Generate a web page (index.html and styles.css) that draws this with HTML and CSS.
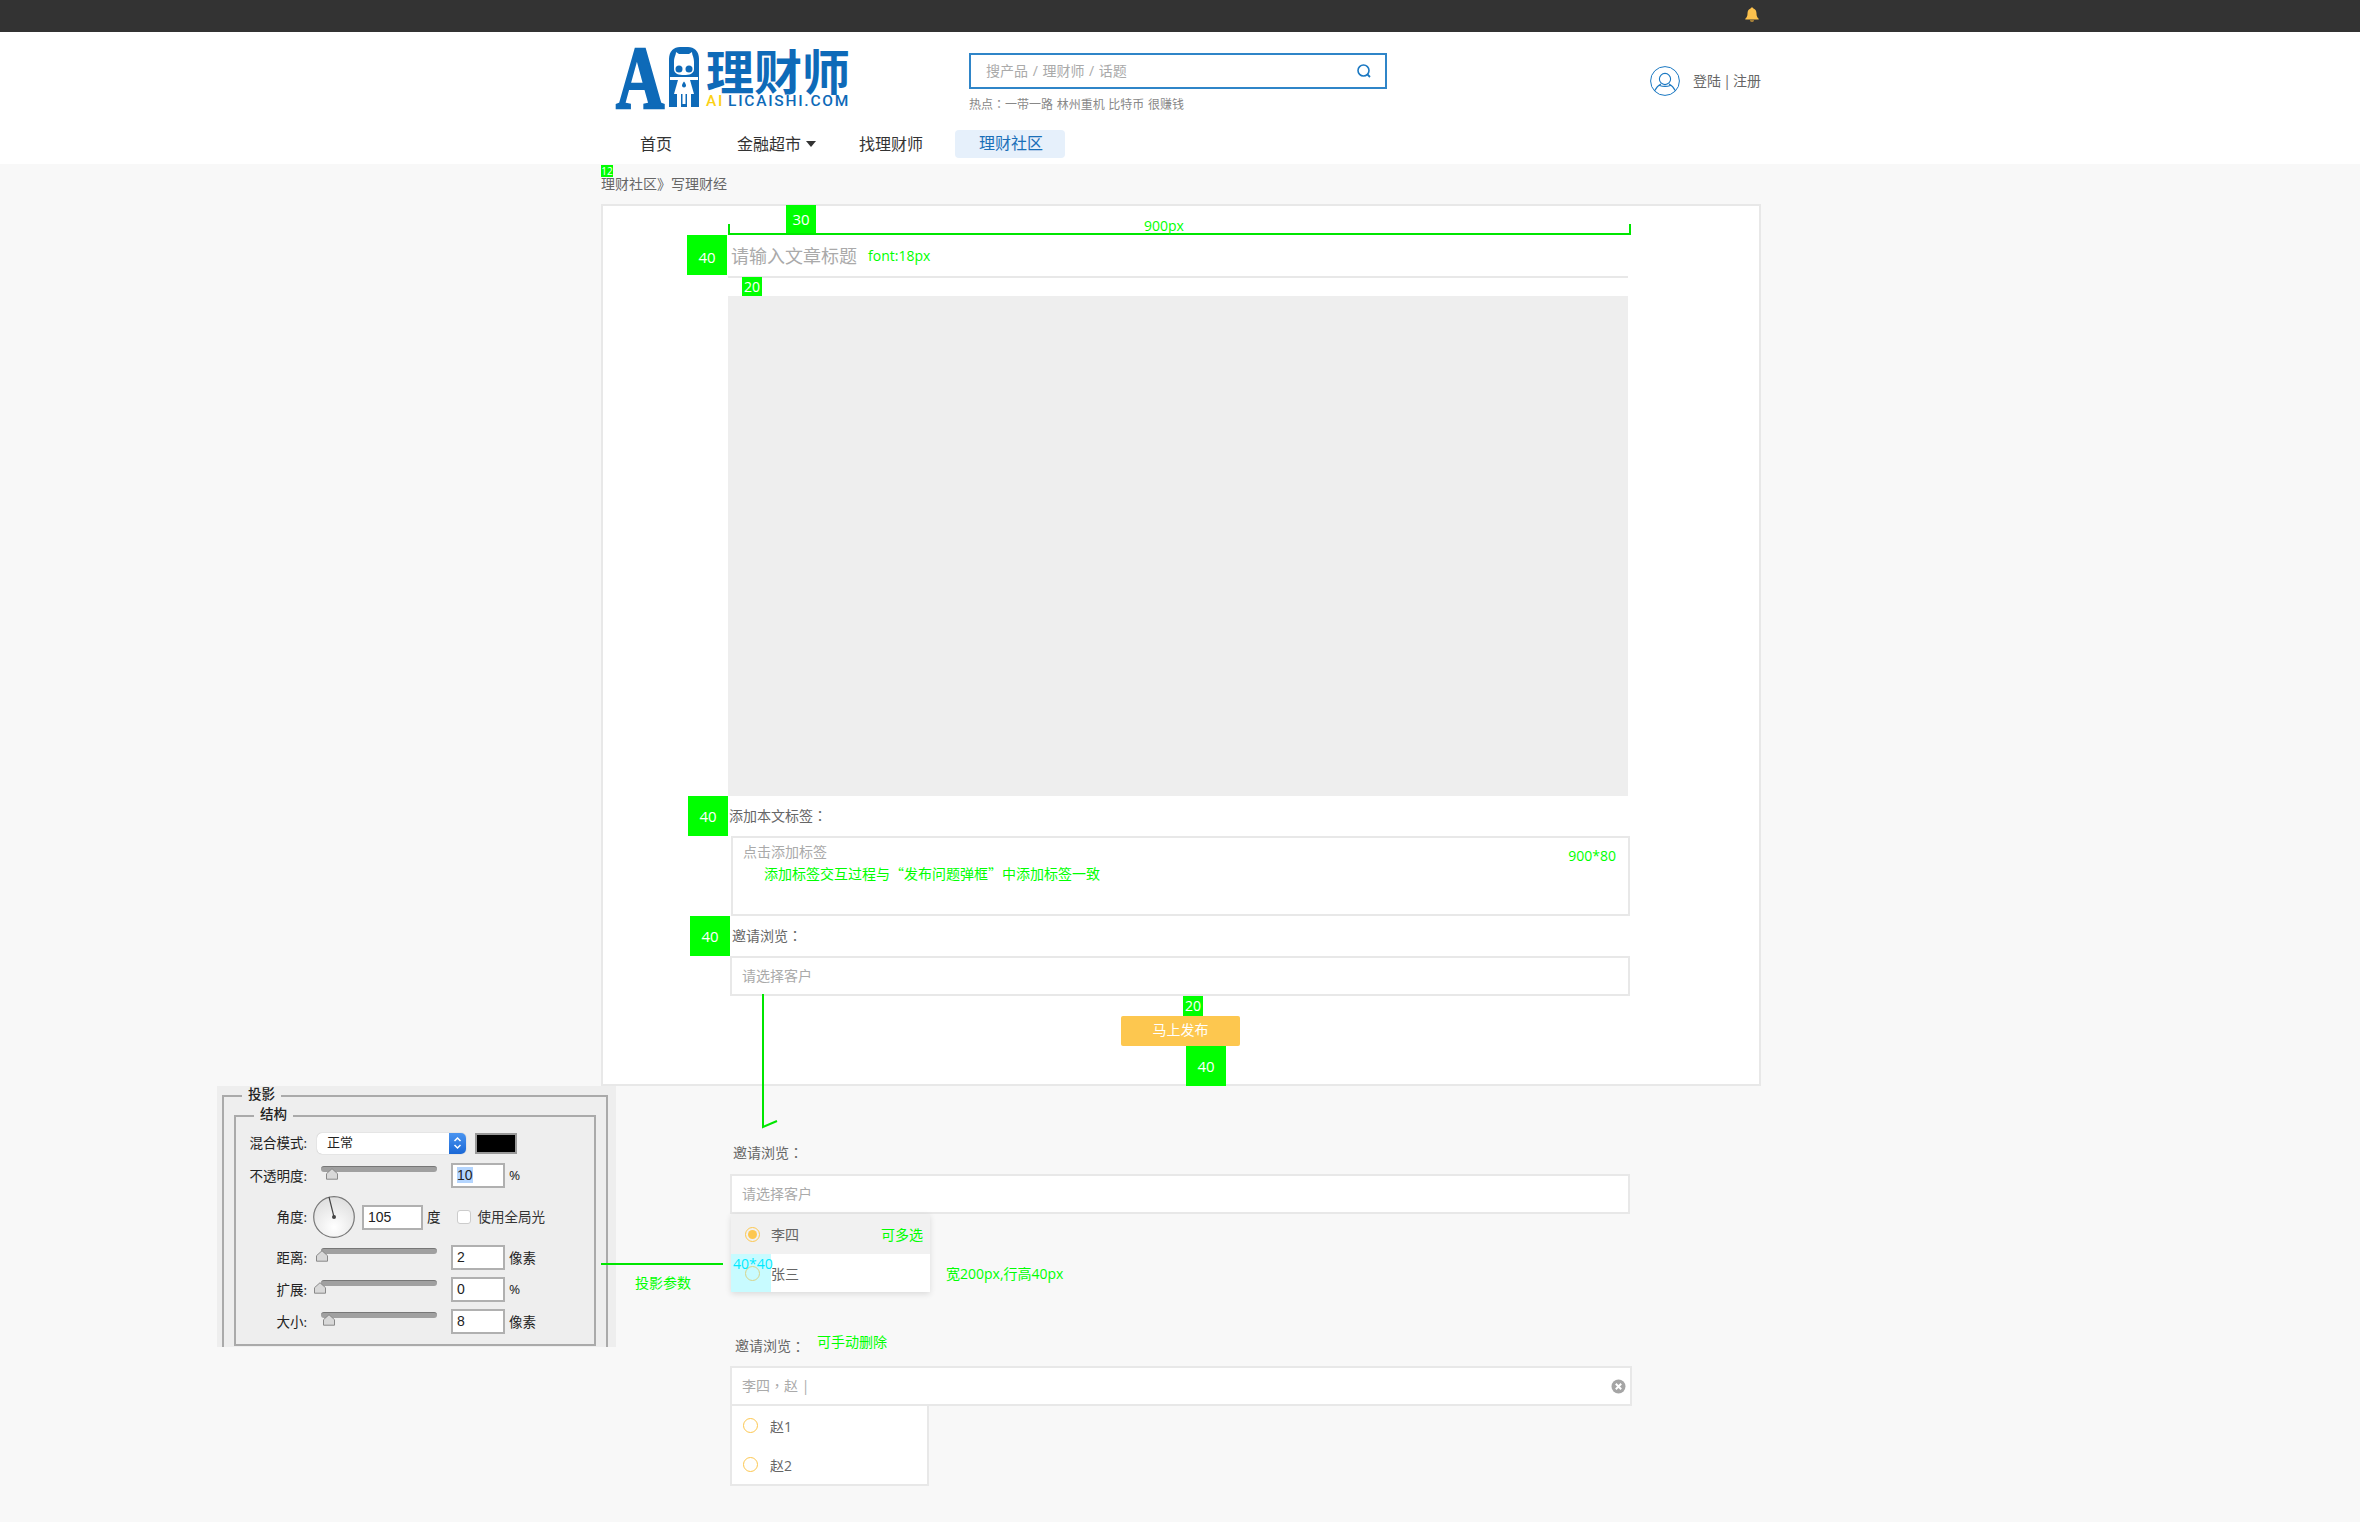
FILE: index.html
```html
<!DOCTYPE html>
<html lang="en">
<head>
  <meta charset="UTF-8">
  <title>写理财经</title>
  <link rel="stylesheet" href="styles.css">
</head>
<body>
  <div class="topbar">
    <div class="wrap topbar-in">
      <svg class="bell" width="14" height="15" viewBox="0 0 14 15"><path d="M7 0.5c.8 0 1.3.5 1.4 1.1C10.500 2.200 11.500 4 11.500 6.500c0 2.500.7 4 2.200 5.300V12.500H.3v-.7C1.800 10.500 2.500 9 2.500 6.500 2.500 4 3.500 2.200 5.600 1.600 5.700 1 6.200.5 7 .5z" fill="#fcc14d"/><path d="M5 13.200h4c0 1-.9 1.600-2 1.600s-2-.6-2-1.600z" fill="#c9973a"/></svg>
    </div>
  </div>

  <header class="header">
    <div class="wrap">
      <div class="head-top">
        <div class="logo">
          <span class="logo-a">A</span>
          <svg class="logo-bot" width="30" height="60" viewBox="0 0 30 60">
            <path d="M0 60V12C0 4 5 0 11 0h8c6 0 11 4 11 12v48z" fill="#0e6ab8"/>
            <path d="M5 15C5 10 7 8 7 5l3 2h10l3-2c0 3 2 5 2 10v7c0 5-5 6-10 6S5 27 5 22z" fill="#fff"/>
            <circle cx="10" cy="22" r="3.500" fill="#0e6ab8"/><circle cx="20" cy="22" r="3.500" fill="#0e6ab8"/>
            <rect x="1" y="30" width="28" height="3" fill="#fff"/>
            <path d="M9 33h12l4 14H5z" fill="#fff"/>
            <rect x="8" y="47" width="4" height="13" fill="#fff"/><rect x="13.500" y="47" width="3" height="10" fill="#fff"/><rect x="18" y="47" width="4" height="13" fill="#fff"/>
            <path d="M15 34.500c1.500 2 2 3 2 4a2 2 0 0 1-4 0c0-1 .5-2 2-4z" fill="#0e6ab8"/>
          </svg>
          <div class="logo-text">
            <div class="logo-cn">理财师</div>
            <div class="logo-en"><span class="logo-ai">AI</span><span class="logo-bar">|</span>LICAISHI.COM</div>
          </div>
        </div>

        <div class="search-col">
          <div class="search">
            <span class="search-ph">搜产品 / 理财师 / 话题</span>
            <svg width="16" height="16" viewBox="0 0 16 16"><circle cx="7.500" cy="7.500" r="5.500" fill="none" stroke="#1a78c2" stroke-width="1.600"/><path d="M11.500 11.500l2.500 2.500" stroke="#1a78c2" stroke-width="1.800"/></svg>
          </div>
          <div class="hot">热点<span class="cp">：</span>一带一路 林州重机 比特币 很赚钱</div>
        </div>

        <div class="user">
          <svg width="30" height="30" viewBox="0 0 30 30"><circle cx="15" cy="15" r="14.400" fill="none" stroke="#1a78c2" stroke-width="1"/><circle cx="15" cy="13" r="5.600" fill="none" stroke="#1a78c2" stroke-width="1.100"/><path d="M4.500 25c2-4 5.500-6.500 6.500-7M25.500 25c-2-4-5.500-6.500-6.500-7M9.500 19.500c3 1 8 1 11 0" fill="none" stroke="#1a78c2" stroke-width="1.100"/></svg>
          <span class="user-txt">登陆 | 注册</span>
        </div>
      </div>

      <nav class="nav">
        <a class="nav-home">首页</a>
        <a class="nav-market">金融超市</a><i class="caret"></i>
        <a class="nav-find">找理财师</a>
        <a class="nav-on">理财社区</a>
      </nav>
    </div>
  </header>

  <div class="wrap">
    <div class="crumb">理财社区》写理财经</div>

    <div class="card">
      <div class="title-row">请输入文章标题<span class="note note-font">font:18px</span></div>
      <div class="editor"></div>
      <div class="label">添加本文标签<span class="cp">：</span></div>
      <div class="tagbox">
        <div class="ph">点击添加标签</div>
        <div class="note tag-note">添加标签交互过程与“发布问题弹框”中添加标签一致</div>
        <span class="note tag-size">900*80</span>
      </div>
      <div class="label label-b">邀请浏览<span class="cp">：</span></div>
      <div class="field"><span class="ph">请选择客户</span></div>
      <div class="btn">马上发布</div>
    </div>

    <div class="lower">
      <div class="label label-low">邀请浏览<span class="cp">：</span></div>
      <div class="field"><span class="ph">请选择客户</span></div>
      <div class="drop">
        <div class="opt opt-on">
          <i class="radio radio-on"></i><span>李四</span><span class="note opt-note">可多选</span>
        </div>
        <div class="opt opt-short">
          <div class="cell-40"><i class="radio radio-pale"></i></div><span class="opt-name">张三</span>
        </div>
      </div>

      <div class="label label-third">邀请浏览<span class="cp">：</span><span class="note third-note">可手动删除</span></div>
      <div class="field field-wide">
        <span class="ph">李四<span class="cp">，</span>赵 |</span>
        <svg width="15" height="15" viewBox="0 0 15 15"><circle cx="7.500" cy="7.500" r="7" fill="#a5a5a5"/><path d="M4.800 4.800l5.400 5.400M10.200 4.800l-5.400 5.400" stroke="#fff" stroke-width="2"/></svg>
      </div>
      <div class="drop drop-flat">
        <div class="opt"><i class="radio"></i><span>赵1</span></div>
        <div class="opt"><i class="radio"></i><span>赵2</span></div>
      </div>
    </div>
  </div>

  <!-- shadow settings picture -->
  <div class="ps">
    <div class="ps-outer">
      <span class="ps-legend ps-legend-a">投影</span>
      <div class="ps-inner">
        <span class="ps-legend ps-legend-b">结构</span>
        <div class="ps-row ps-row-first">
          <label>混合模式:</label>
          <div class="ps-select"><span>正常</span><i class="ps-arrows"><svg width="17" height="20" viewBox="0 0 17 20"><path d="M5.500 8L8.500 5l3 3M5.500 12l3 3 3-3" fill="none" stroke="#fff" stroke-width="1.500"/></svg></i></div>
          <i class="ps-swatch"></i>
        </div>
        <div class="ps-row ps-row-gap">
          <label>不透明度:</label>
          <div class="ps-slider"><i class="ps-track"></i><svg class="ps-thumb" style="left:4px" width="14" height="12" viewBox="0 0 14 12"><path d="M7 .7l5.500 5v5.500H1.500V5.700z" fill="#d8d8d8" stroke="#888"/></svg></div>
          <div class="ps-input"><span class="ps-sel">10</span></div><span class="ps-unit">%</span>
        </div>
        <div class="ps-row ps-row-dial">
          <label>角度:</label>
          <svg class="ps-dial" width="42" height="42" viewBox="0 0 42 42"><defs><radialGradient id="dial" cx=".5" cy=".75" r=".8"><stop offset="0" stop-color="#fff"/><stop offset="1" stop-color="#dcdcdc"/></radialGradient></defs><circle cx="21" cy="21" r="20.300" fill="url(#dial)" stroke="#777" stroke-width="1.200"/><path d="M21 21L16 1" stroke="#444" stroke-width="1.200"/><circle cx="21" cy="21" r="2" fill="#444"/></svg>
          <div class="ps-input ps-input-w">105</div><span class="ps-unit">度</span>
          <i class="ps-check"></i><span class="ps-global">使用全局光</span>
        </div>
        <div class="ps-row">
          <label>距离:</label>
          <div class="ps-slider"><i class="ps-track"></i><svg class="ps-thumb" style="left:-6px" width="14" height="12" viewBox="0 0 14 12"><path d="M7 .7l5.500 5v5.500H1.500V5.700z" fill="#d8d8d8" stroke="#888"/></svg></div>
          <div class="ps-input">2</div><span class="ps-unit">像素</span>
        </div>
        <div class="ps-row">
          <label>扩展:</label>
          <div class="ps-slider"><i class="ps-track"></i><svg class="ps-thumb" style="left:-8px" width="14" height="12" viewBox="0 0 14 12"><path d="M7 .7l5.500 5v5.500H1.500V5.700z" fill="#d8d8d8" stroke="#888"/></svg></div>
          <div class="ps-input">0</div><span class="ps-unit">%</span>
        </div>
        <div class="ps-row">
          <label>大小:</label>
          <div class="ps-slider"><i class="ps-track"></i><svg class="ps-thumb" style="left:1px" width="14" height="12" viewBox="0 0 14 12"><path d="M7 .7l5.500 5v5.500H1.500V5.700z" fill="#d8d8d8" stroke="#888"/></svg></div>
          <div class="ps-input">8</div><span class="ps-unit">像素</span>
        </div>
      </div>
    </div>
  </div>

  <!-- design annotations -->
  <span class="mark mark-12">12</span>
  <span class="mark mark-30">30</span>
  <span class="mark mark-40a">40</span>
  <span class="mark mark-20a">20</span>
  <span class="mark mark-40b">40</span>
  <span class="mark mark-40c">40</span>
  <span class="mark mark-20b">20</span>
  <span class="mark mark-40d">40</span>
  <div class="ruler"></div>
  <span class="note ruler-txt">900px</span>
  <svg class="arrow" width="18" height="136" viewBox="0 0 18 136"><path d="M2 0V133L16 127" fill="none" stroke="#00e600" stroke-width="2"/></svg>
  <i class="link-line"></i>
  <span class="note link-txt">投影参数</span>
  <span class="note size-txt">宽200px,行高40px</span>
  <span class="size-40">40*40</span>
</body>
</html>
```

FILE: styles.css
```css
* { box-sizing: border-box; }
html, body { margin: 0; padding: 0; }
body {
  position: relative;
  height: 1522px;
  overflow: hidden;
  background: #f8f8f8;
  color: #666;
  font: 14px "Open Sans", "Noto Sans CJK SC", sans-serif;
}
i { display: block; font-style: normal; }
/* centred full-width punctuation */
.cp { font-family: "Noto Sans CJK TC", sans-serif; }

.wrap { width: 1160px; margin-left: 601px; }

.topbar { height: 32px; background: #333; }
.topbar-in { display: flex; justify-content: flex-end; align-items: center; height: 32px; padding: 0 2px 3px 0; }

.header { height: 132px; background: #fff; }
.head-top { display: flex; align-items: flex-start; height: 98px; padding: 15px 0 0 15px; }

.logo { display: flex; width: 232px; height: 60px; color: #0e6ab8; }
.logo-a {
  width: 51px;
  height: 60px;
  font: bold 88px/62px "Liberation Serif", serif;
  -webkit-text-stroke: 2.500px #0e6ab8;
  transform: scaleX(.76);
  transform-origin: left center;
}
.logo-bot { flex: none; margin: 0 7px 0 2px; }
.logo-text { width: 142px; }
.logo-cn { height: 49px; font: bold 48px/44px "Noto Sans CJK SC", sans-serif; white-space: nowrap; }
.logo-en { font: 500 15.500px/11px Roboto, sans-serif; letter-spacing: 1.750px; white-space: nowrap; }
.logo-ai { color: #fcd116; }
.logo-bar { color: #fff; letter-spacing: 0; }

.search-col { width: 418px; margin: 6px 0 0 121px; }
.search {
  display: flex;
  justify-content: space-between;
  align-items: center;
  height: 36px;
  padding: 0 13px 0 15px;
  border: 2px solid #2f85c8;
}
.search-ph { padding-bottom: 2px; color: #aaa; word-spacing: 1px; }
.hot { margin-top: 6px; font-size: 12px; line-height: 18px; color: #888; word-spacing: .5px; }

.user { display: flex; align-items: center; margin: 19px 0 0 auto; }
.user-txt { margin-left: 13px; padding-bottom: 2px; color: #666; word-spacing: -1.500px; }

.nav { display: flex; align-items: center; height: 28px; padding-bottom: 2px; font-size: 16px; color: #333; }
.nav-home { margin-left: 39px; }
.nav-market { margin-left: 65px; }
.caret {
  margin: 2px 0 0 5px;
  border-top: 6px solid #333;
  border-left: 5px solid transparent;
  border-right: 5px solid transparent;
}
.nav-find { margin-left: 43px; }
.nav-on {
  margin: 2px 0 0 32px;
  padding: 0 22px 2px 24px;
  line-height: 26px;
  color: #1a6fb8;
  background: #e6f0fb;
  border-radius: 4px;
}

.crumb { margin-top: 10px; height: 30px; line-height: 20px; }

.card {
  height: 882px;
  padding: 30px 0 0 125px;
  background: #fff;
  border: 2px solid #e8e8e8;
}
.title-row {
  display: flex;
  align-items: center;
  width: 900px;
  height: 42px;
  padding: 0 0 2px 3px;
  margin-bottom: 18px;
  font-size: 18px;
  color: #aaa;
  border-bottom: 2px solid #e8e8e8;
}
.note { color: #00ff00; font-size: 14px; }
.note-font { margin-left: 11px; }
.editor { width: 900px; height: 500px; background: #eee; }
.label { height: 40px; line-height: 38px; margin-left: 1px; }
.label-b { margin-left: 4px; }

.tagbox {
  position: relative;
  width: 899px;
  height: 80px;
  margin-left: 3px;
  padding: 4px 10px;
  border: 2px solid #e8e8e8;
}
.ph { color: #aaa; }
.field .ph { padding-bottom: 2px; }
.tagbox .ph { line-height: 20px; }
.tag-note { margin: 1px 0 0 21px; line-height: 20px; font-family: "Noto Sans CJK SC", sans-serif; }
.tag-size { position: absolute; top: 8px; right: 12px; }

.field {
  display: flex;
  justify-content: space-between;
  align-items: center;
  width: 900px;
  height: 40px;
  margin-left: 2px;
  padding: 0 4px 0 10px;
  background: #fff;
  border: 2px solid #e8e8e8;
}
.btn {
  width: 119px;
  height: 30px;
  margin: 20px 0 0 393px;
  padding-bottom: 2px;
  line-height: 28px;
  text-align: center;
  color: #fff;
  background: #fdc74f;
  border-radius: 2px;
}

.lower { padding-left: 127px; }
.label-low { height: 41px; margin: 47px 0 0 5px; }
.drop {
  width: 199px;
  margin-left: 3px;
  background: #fff;
  box-shadow: 0 2px 6px rgba(0, 0, 0, .12);
}
.opt { position: relative; display: flex; align-items: center; height: 40px; padding-left: 14px; }
.opt-on { background: #f1f1f1; }
.opt-short { height: 38px; padding-left: 0; }
.opt-note { margin-left: auto; padding-right: 7px; }
.radio {
  flex: none;
  width: 15px;
  height: 15px;
  margin-right: 11px;
  background: #fff;
  border: 1.500px solid #fdc74f;
  border-radius: 50%;
}
.radio-on { background: #f1f1f1; position: relative; }
.radio-on::after {
  content: "";
  position: absolute;
  inset: 2px;
  background: #fdc74f;
  border-radius: 50%;
}
.cell-40 {
  display: flex;
  justify-content: center;
  align-items: center;
  width: 40px;
  height: 38px;
  padding-top: 1px;
  background: #c8fbff;
}
.radio-pale { margin: 0 0 0 2px; background: transparent; border-color: #d8d38a; }

.label-third { display: flex; height: 39px; margin: 35px 0 0 7px; }
.third-note { margin: -4px 0 0 12px; }
.field-wide { width: 902px; }
.drop-flat {
  width: 199px;
  margin-left: 2px;
  border: 2px solid #e8e8e8;
  border-top: 0;
  box-shadow: none;
}
.drop-flat .opt { height: 39px; padding-left: 11px; }
.drop-flat .radio { margin-right: 12px; }

/* shadow settings picture */
.ps {
  position: absolute;
  left: 217px;
  top: 1086px;
  width: 399px;
  height: 261px;
  padding: 9px 8px 0 5px;
  background: #eee;
  color: #222;
  font-size: 13px;
}
.ps-outer { position: relative; height: 252px; padding: 18px 10px 0 10px; border: 2px solid #aaa; border-bottom: 0; }
.ps-inner { position: relative; height: 231px; padding: 15px 0 0; border: 2px solid #aaa; }
.ps-legend { position: absolute; padding: 0 6px; background: #eee; line-height: 14px; font-weight: 500; font-size: 13.500px; }
.ps-legend-a { left: 18px; top: -10px; }
.ps-legend-b { left: 18px; top: -10px; }
.ps-row { display: flex; align-items: center; height: 25px; margin-bottom: 7px; }
.ps-row-first { height: 22px; margin-bottom: 9px; }
.ps-row-gap { margin-bottom: 8px; }
.ps-row-dial { height: 42px; margin-bottom: 7px; }
.ps-row label { width: 71px; padding-bottom: 2px; text-align: right; white-space: nowrap; font-size: 13.500px; }
.ps-select {
  display: flex;
  justify-content: space-between;
  width: 149px;
  height: 21px;
  margin-left: 10px;
  padding-left: 10px;
  line-height: 19px;
  background: #fff;
  border-radius: 5px;
  box-shadow: 0 0 1px #999;
  overflow: hidden;
}
.ps-arrows { width: 17px; height: 21px; background: linear-gradient(#4a94f0, #1a68d6); }
.ps-swatch { width: 42px; height: 21px; margin-left: 9px; background: #000; border: 2px solid #999; }
.ps-slider { position: relative; width: 116px; height: 25px; margin: 0 14px; }
.ps-track {
  position: absolute;
  top: 3px;
  left: 0;
  right: 0;
  height: 6px;
  background: #a0a0a0;
  border-top: 1px solid #777;
  border-radius: 3px;
}
.ps-thumb { position: absolute; top: 5px; }
.ps-input {
  width: 54px;
  height: 25px;
  padding-left: 4px;
  font: 14px/21px "Liberation Sans", sans-serif;
  background: #fff;
  border: 2px solid #b0b0b0;
}
.ps-sel { background: #b4d5fe; }
.ps-input-w { width: 61px; margin-left: 7px; }
.ps-unit { margin-left: 4px; padding-bottom: 2px; font-size: 13.500px; }
.ps-dial { margin-left: 6px; }
.ps-check { width: 14px; height: 14px; margin-left: 16px; background: #fff; border: 1px solid #ccc; border-radius: 3px; }
.ps-global { margin-left: 7px; padding-bottom: 2px; font-size: 13.500px; color: #333; }

/* design annotations */
.mark {
  position: absolute;
  color: #fff;
  background: #00ff00;
  text-align: center;
}
.mark-12 { left: 601px; top: 165px; width: 12px; height: 12px; font-size: 10px; line-height: 12px; }
.mark-30 { left: 786px; top: 205px; width: 30px; height: 28px; font-size: 15px; line-height: 28px; }
.mark-40a { left: 687px; top: 235px; width: 40px; height: 40px; font-size: 15px; line-height: 44px; }
.mark-20a { left: 742px; top: 277px; width: 20px; height: 19px; line-height: 19px; }
.mark-40b { left: 688px; top: 796px; width: 40px; height: 40px; font-size: 15px; line-height: 40px; }
.mark-40c { left: 690px; top: 916px; width: 40px; height: 40px; font-size: 15px; line-height: 40px; }
.mark-20b { left: 1183px; top: 996px; width: 20px; height: 20px; line-height: 20px; }
.mark-40d { left: 1186px; top: 1046px; width: 40px; height: 40px; font-size: 15px; line-height: 40px; }
.ruler {
  position: absolute;
  left: 728px;
  top: 224px;
  width: 903px;
  height: 11px;
  border: 2px solid #00e600;
  border-top: 0;
}
.ruler-txt { position: absolute; left: 1144px; top: 216px; line-height: 20px; }
.arrow { position: absolute; left: 761px; top: 994px; }
.link-line { position: absolute; left: 601px; top: 1263px; width: 122px; height: 2px; background: #00e600; }
.link-txt { position: absolute; left: 635px; top: 1273px; line-height: 20px; }
.size-txt { position: absolute; left: 946px; top: 1264px; line-height: 20px; }
.size-40 { position: absolute; left: 733px; top: 1254px; line-height: 20px; color: #00eaff; }
```
